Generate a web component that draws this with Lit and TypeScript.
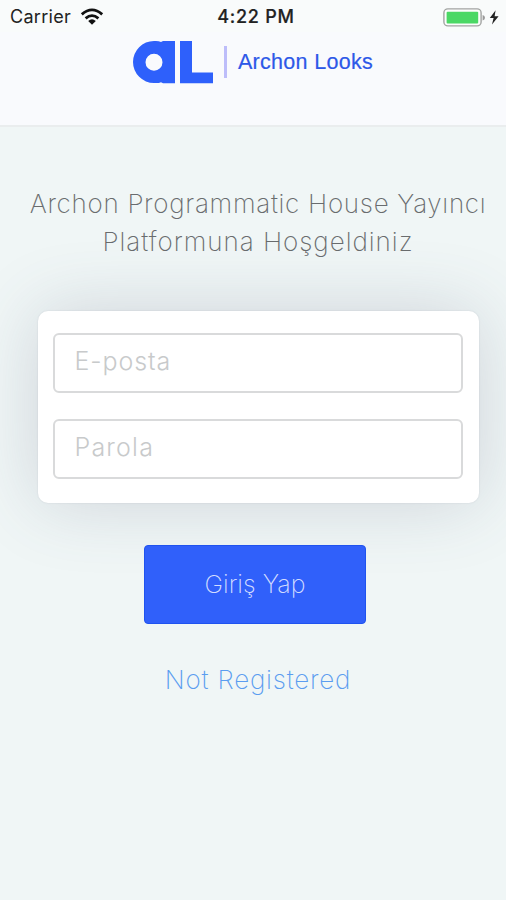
import { LitElement, html, css } from "lit";
import { customElement } from "lit/decorators.js";

@customElement("status-bar")
class StatusBar extends LitElement {
  static styles = css`
    :host {
      display: grid;
      grid-template-columns: 1fr auto 1fr;
      align-items: center;
      height: 32px;
      padding: 0 7px 0 10px;
      box-sizing: border-box;
      background: #f9fbfb;
      font: 400 18px/32px Inter, sans-serif;
      color: #222;
    }
    .side { display: flex; align-items: center; }
    .left { gap: 9px; }
    .right { justify-content: flex-end; }
    .carrier { letter-spacing: 0.3px; padding-top: 1px; }
    .time { font-weight: 500; font-size: 18px; letter-spacing: 0.75px; padding: 1px 0 0 3px; -webkit-text-stroke: 0.2px #222; }
    svg { display: block; }
  `;
  render() {
    return html`
      <div class="side left">
        <span class="carrier">Carrier</span>
        <svg width="24" height="18" viewBox="0 0 24 18">
          <g fill="none" stroke="#111" stroke-width="2.8">
            <path d="M1.8 6.4Q12 -2.6 22.2 6.4" />
            <path d="M5.6 10.4Q12 4.8 18.4 10.4" />
          </g>
          <path d="M8.2 12.9Q12 9.8 15.8 12.9L12 16.8Z" fill="#111" />
        </svg>
      </div>
      <span class="time">4:22 PM</span>
      <div class="side right">
        <svg width="56" height="20" viewBox="0 0 56 20">
          <rect x="0.9" y="1.9" width="37.2" height="17" rx="4" fill="#fcfdfc" stroke="#a2a4a2" stroke-width="1.4" />
          <rect x="3.6" y="4.8" width="31.6" height="11.6" rx="1" fill="#4bd865" />
          <path d="M39.6 8Q42 8.8 42 10.7T39.6 13.5Z" fill="#999" />
          <path d="M52.6 3.2L46.8 11H50.6L49 17.4L55.6 9.2H51.6Z" fill="#222" />
        </svg>
      </div>
    `;
  }
}

@customElement("brand-header")
class BrandHeader extends LitElement {
  static styles = css`
    :host {
      display: flex;
      justify-content: center;
      align-items: flex-start;
      height: 95px;
      padding-top: 8px;
      box-sizing: border-box;
      background: #f9fafd;
      border-bottom: 2px solid #eaedee;
    }
    svg { display: block; }
    .divider { width: 3px; height: 32px; margin: 6px 11px 0 11px; background: #bdbdfa; }
    .name {
      font: 400 21.5px/44px "Liberation Sans", Arial, sans-serif;
      letter-spacing: 0.3px;
      color: #2d58e8;
      -webkit-text-stroke: 0.2px #2d58e8;
      white-space: nowrap;
    }
  `;
  render() {
    return html`
      <svg width="80" height="44" viewBox="0 0 80 44">
        <path
          fill="#2e60fb"
          fill-rule="evenodd"
          d="M21 1A21 21 0 1 0 21 43Q25.5 43.4 28 42.2L30 43.2H42V1H30L28 2Q25.5 0.6 21 1ZM21 13.7A8.5 8.5 0 1 1 21 30.7A8.5 8.5 0 1 1 21 13.7Z"
        />
        <path fill="#2e60fb" d="M47 1H59V32.6H80V43.2H47Z" />
      </svg>
      <span class="divider"></span>
      <span class="name">Archon Looks</span>
    `;
  }
}

@customElement("app-root")
class AppRoot extends LitElement {
  static styles = css`
    :host {
      display: flex;
      flex-direction: column;
      height: 900px;
      overflow: hidden;
      background: #f0f6f6;
      font-family: Inter, sans-serif;
    }
    main {
      display: flex;
      flex-direction: column;
      align-items: center;
      padding-top: 58px;
    }
    h1 {
      margin: 0 0 0 10px;
      font-weight: 200;
      font-size: 26px;
      line-height: 38px;
      text-align: center;
      white-space: nowrap;
      color: #696c6e;
    }
    .line { display: block; letter-spacing: 0.7px; }
    .line.second { letter-spacing: 0.97px; }
    form { display: contents; }
    .card {
      display: flex;
      flex-direction: column;
      gap: 26px;
      width: 441px;
      height: 192px;
      margin: 50px 0 0 10px;
      padding: 21.5px 15px;
      box-sizing: border-box;
      border-radius: 10px;
      background: #fff;
      box-shadow: 0 0 2px rgba(60, 60, 70, 0.12), 0 0 72px rgba(70, 80, 110, 0.2);
    }
    input {
      display: block;
      width: 410px;
      height: 60px;
      padding: 0 19px 3px 20px;
      box-sizing: border-box;
      border: 2px solid #d9dadb;
      border-radius: 6px;
      background: #fff;
      outline: none;
      font: 300 25px Inter, sans-serif;
      letter-spacing: 0.9px;
    }
    input[type="password"] { letter-spacing: 1.2px; }
    input::placeholder { color: #c8cacb; opacity: 1; }
    button {
      width: 222px;
      height: 79px;
      margin: 42px 0 0 4px;
      padding: 0 0 2px;
      border: 1px solid #1f53ef;
      border-radius: 4px;
      background: #3060fa;
      color: #d3dcff;
      font: 200 25px Inter, sans-serif;
      letter-spacing: 0;
    }
    a {
      margin: 37px 0 0 10px;
      color: #5b9df0;
      font-weight: 200;
      font-size: 26px;
      line-height: 38px;
      letter-spacing: 0.8px;
      text-decoration: none;
    }
  `;
  render() {
    return html`
      <status-bar></status-bar>
      <brand-header></brand-header>
      <main>
        <h1>
          <span class="line">Archon Programmatic House Yayıncı</span>
          <span class="line second">Platformuna Hoşgeldiniz</span>
        </h1>
        <form>
          <div class="card">
            <input type="text" placeholder="E-posta" />
            <input type="password" placeholder="Parola" />
          </div>
          <button type="button">Giriş Yap</button>
        </form>
        <a href="#">Not Registered</a>
      </main>
    `;
  }
}
